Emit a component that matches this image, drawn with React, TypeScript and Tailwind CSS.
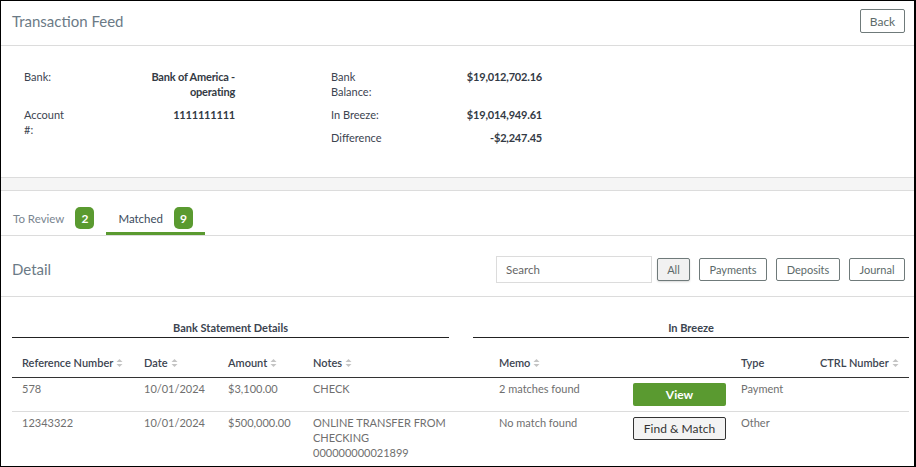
import React from 'react';

const green = 'bg-[#5a9a30]';

function SortIcon() {
  return (
    <svg width="7" height="10" viewBox="0 0 7 10" className="ml-[3px] inline-block align-[-1px]">
      <path d="M3.5 1 L6.5 4 L0.5 4 Z" fill="#c4c4c4" />
      <path d="M3.5 9 L6.5 6 L0.5 6 Z" fill="#c4c4c4" />
    </svg>
  );
}

function InfoRow({ label, value }: { label: React.ReactNode; value: React.ReactNode }) {
  return (
    <div className="flex w-[211px] items-start justify-between">
      <div className="w-[49px] text-[#3c4450]">{label}</div>
      <div className="w-[120px] text-right font-bold tracking-[-0.2px] text-[#333a44]">{value}</div>
    </div>
  );
}

function Tab({ label, count, active }: { label: string; count: number; active?: boolean }) {
  return (
    <div
      className={`flex items-center gap-[11px] px-[12px] pt-[16px] pb-[3px] border-b-[3px] text-[11.5px] ${
        active ? 'border-[#5a9a30] text-[#3b4a5c]' : 'border-transparent text-[#7a8590]'
      }`}
    >
      <span>{label}</span>
      <span className={`flex h-[22px] w-[19px] items-center justify-center rounded-[5px] ${green} text-[12px] font-bold text-white`}>
        {count}
      </span>
    </div>
  );
}

function FilterButton({ label, width, active }: { label: string; width: string; active?: boolean }) {
  return (
    <button
      type="button"
      className={`h-[23px] ${width} rounded-[2px] border border-[#6f7a7a] text-[#5c6a6a] ${
        active ? 'bg-[#f1f1f1] shadow-[0_1px_2px_rgba(0,0,0,0.15)]' : 'bg-white'
      }`}
    >
      {label}
    </button>
  );
}

const cols = 'grid grid-cols-[122px_84px_85px_186px_134px_108px_79px_99px]';

const rows = [
  {
    ref: '578',
    date: '10/01/2024',
    amount: '$3,100.00',
    notes: 'CHECK',
    memo: '2 matches found',
    matched: true,
    type: 'Payment',
  },
  {
    ref: '12343322',
    date: '10/01/2024',
    amount: '$500,000.00',
    notes: 'ONLINE TRANSFER FROM CHECKING 000000000021899',
    memo: 'No match found',
    matched: false,
    type: 'Other',
  },
];

export default function App() {
  return (
    <div
      className="h-[467px] w-[916px] overflow-hidden border border-r-2 border-black bg-white text-[11px] leading-[15px]"
      style={{ fontFamily: 'Lato, "Open Sans", sans-serif' }}
    >
      {/* header */}
      <div className="flex h-[45px] items-start justify-between border-b border-[#dcdcdc] pl-[11px] pr-[9px] pt-[8px]">
        <h1 className="pt-[2px] text-[15px] leading-[20px] text-[#6b7a86]">Transaction Feed</h1>
        <button type="button" className="h-[24px] w-[45px] rounded-[2px] border border-[#6f7a7a] text-[12px] text-[#5c6a6a]">
          Back
        </button>
      </div>

      {/* account summary */}
      <div className="flex h-[131px] gap-[96px] px-[23px] pt-[23px]">
        <div className="flex flex-col gap-[8px]">
          <InfoRow label="Bank:" value="Bank of America - operating" />
          <InfoRow label="Account #:" value="1111111111" />
        </div>
        <div className="flex flex-col gap-[8px]">
          <InfoRow label="Bank Balance:" value="$19,012,702.16" />
          <InfoRow label="In Breeze:" value="$19,014,949.61" />
          <InfoRow label="Difference" value="-$2,247.45" />
        </div>
      </div>

      <div className="h-[14px] border-y border-[#dcdcdc] bg-[#f5f5f5]" />

      {/* tabs */}
      <div className="flex border-b border-[#dcdcdc]">
        <Tab label="To Review" count={2} />
        <Tab label="Matched" count={9} active />
      </div>

      {/* detail toolbar */}
      <div className="flex h-[61px] items-center border-b border-[#dcdcdc] pl-[11px] pr-[9px] pt-[6px]">
        <h2 className="text-[15px] text-[#6b7a86]">Detail</h2>
        <div className="ml-auto flex items-center gap-[9px]">
          <input
            placeholder="Search"
            className="mr-[-4px] h-[27px] w-[156px] border border-[#dcdcdc] px-[9px] text-[11.5px] text-[#555] placeholder:text-[#666] outline-none"
          />
          <FilterButton label="All" width="w-[33px]" active />
          <FilterButton label="Payments" width="w-[68px]" />
          <FilterButton label="Deposits" width="w-[64px]" />
          <FilterButton label="Journal" width="w-[56px]" />
        </div>
      </div>

      {/* table */}
      <div className="ml-[11px] mr-[5px]">
        <div className="flex gap-[24px] pt-[23px] font-bold text-[#3c4450]">
          <div className="w-[437px] border-b border-[#222] pb-[2px] text-center">Bank Statement Details</div>
          <div className="flex-1 border-b border-[#222] pb-[2px] text-center">In Breeze</div>
        </div>

        <div className={`${cols} whitespace-nowrap border-b border-[#333] pt-[17px] pb-[7px] font-semibold text-[#3c4450]`}>
          <div className="px-[10px]">Reference Number<SortIcon /></div>
          <div className="px-[10px]">Date<SortIcon /></div>
          <div className="px-[10px]">Amount<SortIcon /></div>
          <div className="px-[10px]">Notes<SortIcon /></div>
          <div className="px-[10px]">Memo<SortIcon /></div>
          <div />
          <div className="px-[10px]">Type</div>
          <div className="px-[10px]">CTRL Number<SortIcon /></div>
        </div>

        {rows.map((r, i) => (
          <div
            key={r.ref}
            className={`${cols} text-[#6f6f6f] ${i === 0 ? 'border-b border-[#dcdcdc] pb-[5px]' : ''}`}
          >
            <div className="px-[10px] pt-[3px]">{r.ref}</div>
            <div className="px-[10px] pt-[3px]">{r.date}</div>
            <div className="px-[10px] pt-[3px]">{r.amount}</div>
            <div className="pl-[10px] pr-[32px] pt-[3px]">{r.notes}</div>
            <div className="px-[10px] pt-[3px]">{r.memo}</div>
            <div className="px-[10px] pt-[5px]">
              {r.matched ? (
                <button type="button" className={`h-[23px] w-[93px] rounded-[2px] ${green} text-[12px] font-bold text-white`}>
                  View
                </button>
              ) : (
                <button
                  type="button"
                  className="h-[23px] w-[93px] rounded-[2px] border border-[#333] bg-[#f3f3f3] text-[12px] text-[#333]"
                >
                  Find &amp; Match
                </button>
              )}
            </div>
            <div className="px-[10px] pt-[3px]">{r.type}</div>
            <div className="px-[10px] pt-[3px]" />
          </div>
        ))}
      </div>
    </div>
  );
}
